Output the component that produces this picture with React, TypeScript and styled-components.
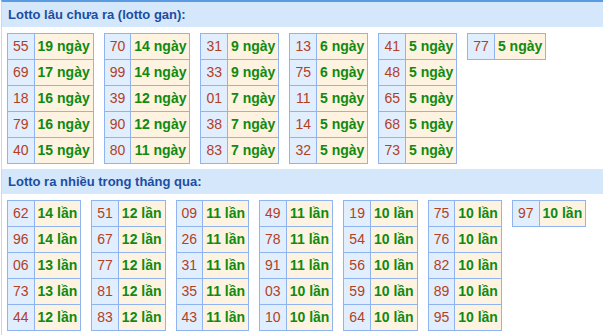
import React, { FC } from "react";
import styled, { createGlobalStyle } from "styled-components";

const GlobalStyle = createGlobalStyle`
  html, body {
    margin: 0;
    padding: 0;
    background: #ffffff;
  }
  body {
    font-family: "Liberation Sans", Arial, sans-serif;
  }
`;

type Pair = [string, number];

const GAN: Pair[][] = [
  [["55", 19], ["69", 17], ["18", 16], ["79", 16], ["40", 15]],
  [["70", 14], ["99", 14], ["39", 12], ["90", 12], ["80", 11]],
  [["31", 9], ["33", 9], ["01", 7], ["38", 7], ["83", 7]],
  [["13", 6], ["75", 6], ["11", 5], ["14", 5], ["32", 5]],
  [["41", 5], ["48", 5], ["65", 5], ["68", 5], ["73", 5]],
  [["77", 5]],
];

const NHIEU: Pair[][] = [
  [["62", 14], ["96", 14], ["06", 13], ["73", 13], ["44", 12]],
  [["51", 12], ["67", 12], ["77", 12], ["81", 12], ["83", 12]],
  [["09", 11], ["26", 11], ["31", 11], ["35", 11], ["43", 11]],
  [["49", 11], ["78", 11], ["91", 11], ["03", 10], ["10", 10]],
  [["19", 10], ["54", 10], ["56", 10], ["59", 10], ["64", 10]],
  [["75", 10], ["76", 10], ["82", 10], ["89", 10], ["95", 10]],
  [["97", 10]],
];

const Wrapper = styled.div`
  width: 603px;
  height: 335px;
  overflow: hidden;
  border-top: 2px solid #5b9be2;
  border-left: 1px solid #c9d9ec;
  margin-left: 1px;
  box-sizing: border-box;
`;

const SectionTitle = styled.div`
  height: 25px;
  line-height: 25px;
  padding-left: 6px;
  background: #d5e8fb;
  color: #1b4ea3;
  font-size: 13px;
  font-weight: bold;
`;

const Tables = styled.div`
  display: flex;
  align-items: flex-start;
  gap: 10px;
  padding: 6px 0 5px 5px;
`;

const Table = styled.table`
  border-collapse: collapse;
  font-size: 14px;
`;

const NumCell = styled.td`
  height: 25px;
  padding: 0 5px;
  line-height: 25px;
  border: 1px solid #8fb4ef;
  background: #e1eefd;
  color: #b3401f;
  text-align: center;
`;

const ValueCell = styled.td`
  height: 25px;
  padding: 0 3px;
  line-height: 25px;
  border: 1px solid #8fb4ef;
  background: #fef3e1;
  color: #108a10;
  font-weight: bold;
  white-space: nowrap;
  text-align: center;
`;

interface GroupProps {
  rows: Pair[];
  unit: string;
}

const Group: FC<GroupProps> = ({ rows, unit }) => (
  <Table>
    <tbody>
      {rows.map(([num, count]) => (
        <tr key={num}>
          <NumCell>{num}</NumCell>
          <ValueCell>
            {count} {unit}
          </ValueCell>
        </tr>
      ))}
    </tbody>
  </Table>
);

const App: FC = () => {
  return (
    <>
      <GlobalStyle />
      <Wrapper>
        <SectionTitle>Lotto lâu chưa ra (lotto gan):</SectionTitle>
        <Tables>
          {GAN.map((rows, i) => (
            <Group key={i} rows={rows} unit="ngày" />
          ))}
        </Tables>
        <SectionTitle>Lotto ra nhiều trong tháng qua:</SectionTitle>
        <Tables>
          {NHIEU.map((rows, i) => (
            <Group key={i} rows={rows} unit="lần" />
          ))}
        </Tables>
      </Wrapper>
    </>
  );
};

export default App;
